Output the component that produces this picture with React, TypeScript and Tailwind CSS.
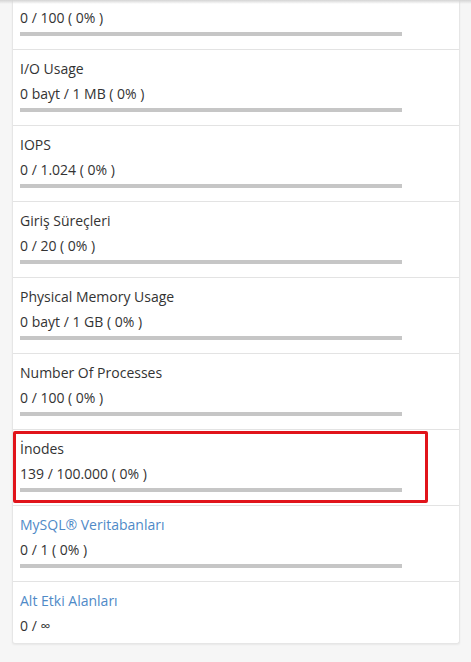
import React from 'react';

type Stat = {
  label?: string;
  value: string;
  link?: boolean;
  bar?: boolean;
  marked?: boolean;
};

// first entry is scrolled past its title
const stats: Stat[] = [
  { value: '0 / 100 ( 0% )', bar: true },
  { label: 'I/O Usage', value: '0 bayt / 1 MB ( 0% )', bar: true },
  { label: 'IOPS', value: '0 / 1.024 ( 0% )', bar: true },
  { label: 'Giriş Süreçleri', value: '0 / 20 ( 0% )', bar: true },
  { label: 'Physical Memory Usage', value: '0 bayt / 1 GB ( 0% )', bar: true },
  { label: 'Number Of Processes', value: '0 / 100 ( 0% )', bar: true },
  { label: 'İnodes', value: '139 / 100.000 ( 0% )', bar: true, marked: true },
  { label: 'MySQL® Veritabanları', value: '0 / 1 ( 0% )', link: true, bar: true },
  { label: 'Alt Etki Alanları', value: '0 / ∞', link: true },
];

const StatRow = ({ stat, first, last }: { stat: Stat; first: boolean; last: boolean }) => (
  <div
    className={`relative px-[7px] ${first ? 'pt-[8px]' : 'pt-[9px]'} ${
      last ? 'pb-[7px]' : 'pb-[13px] border-b border-[#e3e3e3]'
    }`}
  >
    {/* annotation box */}
    {stat.marked && (
      <div className="absolute left-0 top-[1px] w-[415px] h-[72px] border-[3px] border-[#e1141b] rounded-[2px]" />
    )}
    {stat.label && (
      <div className={`mb-[5px] h-5 leading-5 ${stat.link ? 'text-[#4f8ac7]' : 'text-[#333333]'}`}>{stat.label}</div>
    )}
    <div className="h-5 leading-5 text-[#333333]">{stat.value}</div>
    {stat.bar && <div className="mt-[4px] h-[4px] w-[382px] bg-[#c6c6c6]" />}
  </div>
);

const App = () => {
  return (
    <div
      className="relative min-h-[662px] w-full overflow-hidden bg-[#f6f6f6] px-3 text-[14px]"
      style={{ fontFamily: '"Open Sans", "Liberation Sans", sans-serif' }}
    >
      {/* header shadow */}
      <div className="absolute left-0 right-0 top-0 h-[4px] bg-gradient-to-b from-[#d4d4d4] to-transparent z-10" />

      <div className="w-[448px] bg-white border border-[#e6e6e6] border-t-0 rounded-b-[3px] shadow-[0_1px_2px_rgba(0,0,0,0.06)]">
        {stats.map((s, i) => (
          <StatRow key={i} stat={s} first={i === 0} last={i === stats.length - 1} />
        ))}
      </div>
    </div>
  );
};

export default App;
